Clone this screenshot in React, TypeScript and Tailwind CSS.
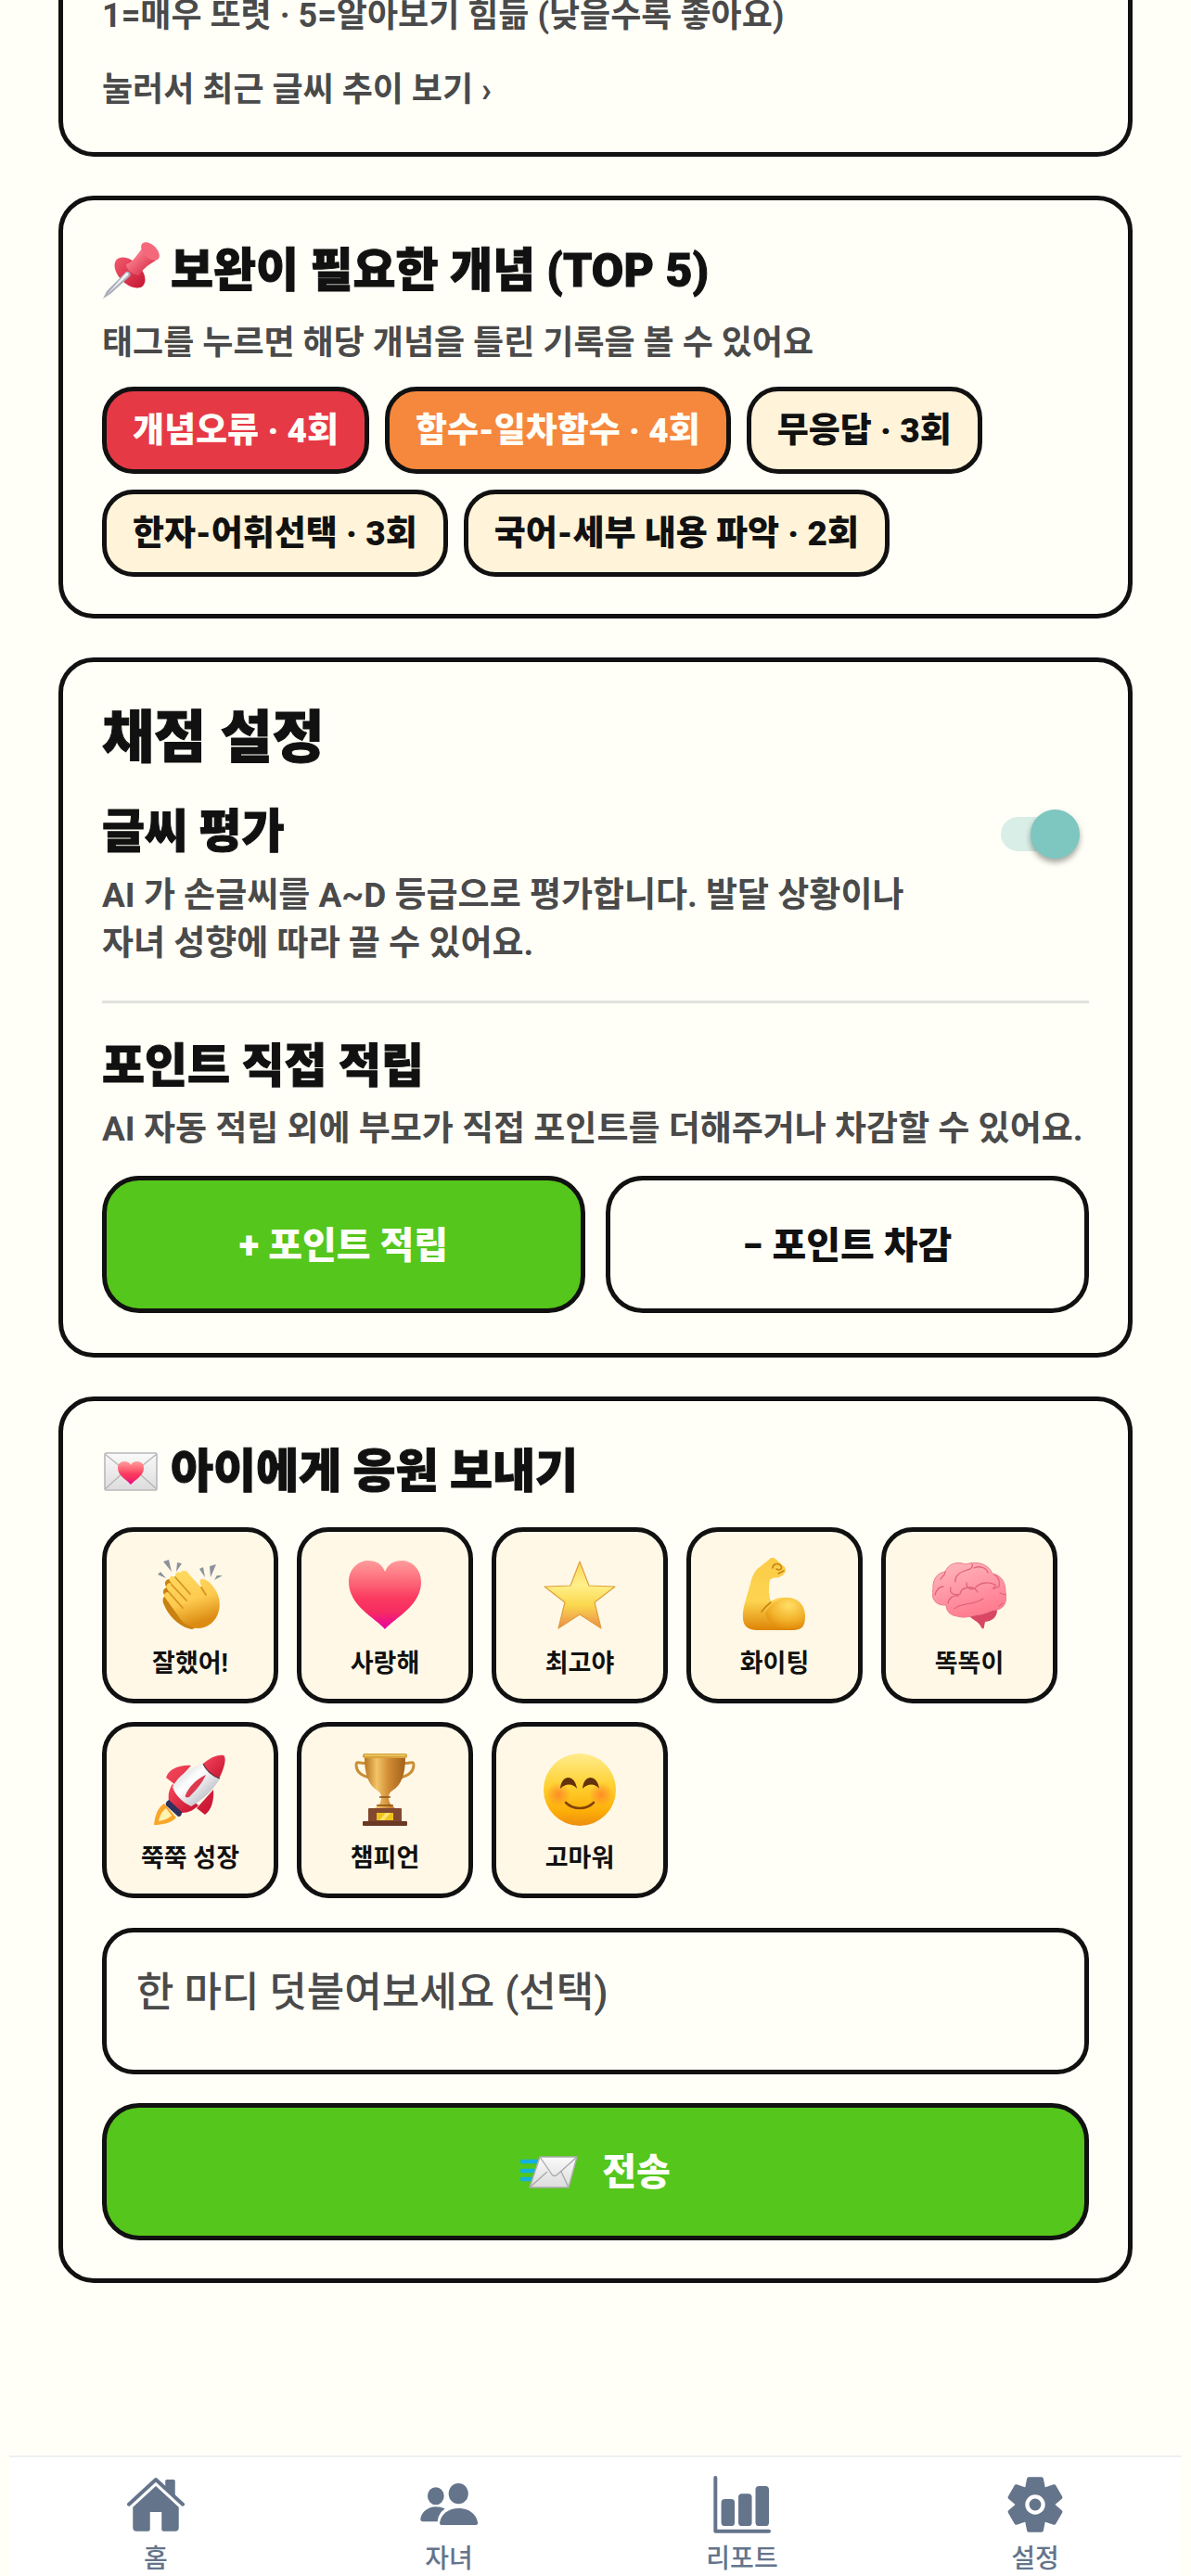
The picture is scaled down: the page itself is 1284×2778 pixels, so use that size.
import { useState } from 'react'
import type { ReactNode } from 'react'
import clsx from 'clsx'

type Tone = 'red' | 'orange' | 'cream'

interface Concept {
  name: string
  count: number
  tone: Tone
}

const CONCEPTS: Concept[] = [
  { name: '개념오류', count: 4, tone: 'red' },
  { name: '함수-일차함수', count: 4, tone: 'orange' },
  { name: '무응답', count: 3, tone: 'cream' },
  { name: '한자-어휘선택', count: 3, tone: 'cream' },
  { name: '국어-세부 내용 파악', count: 2, tone: 'cream' },
]

const TONES: Record<Tone, string> = {
  red: 'bg-[#e63946] text-[#fffff8]',
  orange: 'bg-[#f6883d] text-[#fffff8]',
  cream: 'bg-[#fff3d9] text-[#111111]',
}

function Emoji({ children }: { children: ReactNode }) {
  return (
    <svg viewBox="0 0 80 80" className="size-20" aria-hidden="true">
      {children}
    </svg>
  )
}

function Clap() {
  return (
    <Emoji>
      <defs>
        <linearGradient id="clap" x1="0" y1="0" x2="0.3" y2="1">
          <stop offset="0" stopColor="#ffdc62" />
          <stop offset="0.6" stopColor="#fdcb50" />
          <stop offset="1" stopColor="#dd8c12" />
        </linearGradient>
      </defs>
      <path d="M5 18l3-3 6 7zM11 4l6-2 3 13zM26 5l5 1-6 9zM50 12l4-2 2 11zM61 9l7-2-6 14zM66 24l3-5 6 0z" fill="#8b929c" />
      <path d="M17 23c-5 1-5 6-2 9-5 1-5 6-2 9-3 2-3 6-1 10 5 12 17 24 30 26l14-6L30 22z" fill="#c9810f" />
      <path
        d="M29 16c4-4 8-2 10 2l13 14c0-4-3-8 0-9 6-1 11 5 15 11 8 12 6 30-6 38-10 7-22 4-30-4L13 43c-3-4 2-8 5-5l-3-5c-2-5 3-8 6-4l-3-4c-2-4 3-7 6-4-1-4 3-7 5-5z"
        fill="url(#clap)"
      />
      <path d="M24 21l16 18M20 29l16 17M17 37l15 17M52 32l5 8" fill="none" stroke="#d79321" strokeWidth="1.8" strokeLinecap="round" />
    </Emoji>
  )
}

function Heart() {
  return (
    <Emoji>
      <defs>
        <linearGradient id="heart" x1="0" y1="0" x2="0" y2="1">
          <stop offset="0" stopColor="#ff9c9c" />
          <stop offset="0.3" stopColor="#fd6a7a" />
          <stop offset="0.55" stopColor="#fb3a60" />
          <stop offset="0.75" stopColor="#f62c62" />
          <stop offset="1" stopColor="#e600a4" />
        </linearGradient>
      </defs>
      <path
        d="M40 77C30 65 1 52 1 26 1 11 12 3 22 3c9 0 15 4 18 12 3-8 9-12 18-12 10 0 21 8 21 23 0 26-29 39-39 51z"
        fill="url(#heart)"
      />
    </Emoji>
  )
}

function Star() {
  return (
    <Emoji>
      <defs>
        <linearGradient id="star" x1="0" y1="0" x2="0" y2="1">
          <stop offset="0" stopColor="#fbd65a" />
          <stop offset="0.35" stopColor="#fff08a" />
          <stop offset="0.65" stopColor="#fbd84e" />
          <stop offset="1" stopColor="#ea8a4a" />
        </linearGradient>
      </defs>
      <path
        d="M40 4l10 26 28 1-22 17 7 28-23-15-23 15 7-28L2 31l28-1z"
        fill="url(#star)"
        stroke="#dfa03c"
        strokeWidth="1.2"
        strokeLinejoin="round"
      />
    </Emoji>
  )
}

function Muscle() {
  return (
    <Emoji>
      <defs>
        <linearGradient id="muscle" x1="0" y1="0" x2="0" y2="1">
          <stop offset="0" stopColor="#fbcc48" />
          <stop offset="0.6" stopColor="#fdd44f" />
          <stop offset="1" stopColor="#dd8406" />
        </linearGradient>
        <radialGradient id="bicep" cx="0.6" cy="0.25" r="0.8">
          <stop offset="0" stopColor="#ffdf66" />
          <stop offset="0.6" stopColor="#f3b22c" />
          <stop offset="1" stopColor="#e08a08" />
        </radialGradient>
      </defs>
      <path
        d="M34 2c2-3 5-3 8 0l9 8c3 4-1 9-6 11-4 1-8 0-10 3-2 8-1 17 1 23 5-4 12-5 20-4 12 2 17 10 17 20 0 11-3 14-12 15H20C9 77 5 73 6 59c1-9 5-20 8-31 2-9 5-15 10-18z"
        fill="url(#muscle)"
      />
      <path d="M30 60c6-12 16-17 26-17 12 2 16 10 16 20 0 10-4 13-12 13-14 1-26-2-30-16z" fill="url(#bicep)" />
      <path d="M38 11c0-5 7-6 9-2 2 3-2 5-5 3M50 14l-6 3M26 58c3-4 6-7 10-10" fill="none" stroke="#c98213" strokeWidth="1.6" strokeLinecap="round" />
    </Emoji>
  )
}

function Brain() {
  return (
    <Emoji>
      <defs>
        <linearGradient id="brain" x1="0" y1="0" x2="0.4" y2="1">
          <stop offset="0" stopColor="#ffb9c0" />
          <stop offset="1" stopColor="#ff7d90" />
        </linearGradient>
      </defs>
      <path d="M38 61c5 6 12 7 15 14 1 2 3 2 3-1l1-5c8-1 13-5 13-13l-10-6z" fill="#d94763" />
      <path
        d="M14 15c3-8 12-12 22-8 12-4 24-1 29 10 9 2 14 8 14 20 2 8 0 17-9 19-7 0-11 4-18 5-10 1-16 5-25 2-9-1-12-7-12-12C4 52-2 44 1 34 0 24 5 16 14 15z"
        fill="url(#brain)"
        stroke="#ec7f8d"
        strokeWidth="1"
      />
      <path
        d="M20 32c-2 6 3 9 10 7 1-7 14-11 19-2M37 27c0 6 4 8 9 6 4-6 14-8 22-4l-1 4M25 26c-1-8 6-11 13-13 5-1 6-4 5-6M14 15c0 4-3 4-5 8M45 11c6-3 14 0 15 5M24 55c6-7 19-3 31-11M67 18c5 3 6 8 5 13l-7 2M17 49c1-6 6-9 11-8M73 38l6 2M72 52l4-3M3 40c2-7 5-9 9-9"
        fill="none"
        stroke="#e0657c"
        strokeWidth="1.3"
        strokeLinecap="round"
      />
    </Emoji>
  )
}

function Rocket() {
  return (
    <Emoji>
      <defs>
        <linearGradient id="rocket-body" x1="0" y1="0" x2="1" y2="1">
          <stop offset="0.1" stopColor="#d2d3da" />
          <stop offset="0.4" stopColor="#ffffff" />
          <stop offset="0.9" stopColor="#a9abb6" />
        </linearGradient>
        <linearGradient id="rocket-red" x1="0" y1="0" x2="1" y2="1">
          <stop offset="0" stopColor="#f5495c" />
          <stop offset="1" stopColor="#c6112f" />
        </linearGradient>
      </defs>
      <path d="M12 55C5 59 2 68 1 78c9 0 19-2 24-8z" fill="#f9a62b" />
      <path d="M14 60c-5 4-7 9-8 14 6-1 11-3 14-6z" fill="#fff3b0" />
      <path d="M41 14c-13-1-24 4-27 13l9 7zM65 40c1 11-2 22-9 27l-9-7z" fill="url(#rocket-red)" />
      <path d="M21 34c-4 6-5 12-4 18l14 13c7 0 13-3 18-8z" fill="url(#rocket-red)" />
      <path d="M54 12C40 16 27 25 21 37c3 9 10 16 20 21 11-6 24-17 31-30z" fill="url(#rocket-body)" />
      <path d="M54 12c7-6 15-10 22-9 4 3 0 16-5 25-7-3-14-9-17-16z" fill="url(#rocket-red)" />
      <path d="M54 12c3 7 10 13 18 16" fill="none" stroke="#5b3441" strokeWidth="1.2" />
      <path d="M35 46c3-8 11-17 22-22-4 9-11 17-18 24-3 1-5 0-4-2z" fill="#dd3a50" />
      <path d="M17 51c-3 2-4 4-3 6l13 12c3 0 4-2 4-5z" fill="#2e315c" />
    </Emoji>
  )
}

function Trophy() {
  return (
    <Emoji>
      <defs>
        <linearGradient id="trophy" x1="0" y1="0" x2="1" y2="0">
          <stop offset="0" stopColor="#b8741c" />
          <stop offset="0.3" stopColor="#f3c467" />
          <stop offset="0.6" stopColor="#cf8a34" />
          <stop offset="1" stopColor="#a3611a" />
        </linearGradient>
      </defs>
      <path
        d="M19 11c-4 2-10-3-10 2 0 8 5 12 15 14M61 11c4 2 10-3 10 2 0 8-5 12-15 14"
        fill="none"
        stroke="#c98f35"
        strokeWidth="3"
        strokeLinecap="round"
      />
      <path d="M18 5h44c0 18-4 30-14 36-3 2-4 4-4 7 0 6 2 8 8 13H28c6-5 8-7 8-13 0-3-1-5-4-7C22 35 18 23 18 5z" fill="url(#trophy)" />
      <rect x="16" y="1" width="48" height="5" rx="2" fill="#d9a33b" />
      <path d="M18 3h44" stroke="#f8dd83" strokeWidth="1.2" />
      <path d="M34 48h12M31 57h18" stroke="#8a5317" strokeWidth="1.4" />
      <rect x="22" y="60" width="36" height="15" rx="1" fill="#82492f" />
      <rect x="16" y="74" width="48" height="5" rx="1" fill="#6b3823" />
      <rect x="31" y="65" width="18" height="8" fill="#f0c21c" />
      <path d="M34 73l7-8h5l-7 8z" fill="#fbe56d" />
    </Emoji>
  )
}

function Smile() {
  return (
    <Emoji>
      <defs>
        <linearGradient id="smile" x1="0" y1="0" x2="0" y2="1">
          <stop offset="0" stopColor="#ffec8e" />
          <stop offset="0.45" stopColor="#fed12f" />
          <stop offset="0.8" stopColor="#fcae08" />
          <stop offset="1" stopColor="#ee8c10" />
        </linearGradient>
        <radialGradient id="blush">
          <stop offset="0" stopColor="#ff7a2a" stopOpacity="0.75" />
          <stop offset="1" stopColor="#ff7a2a" stopOpacity="0" />
        </radialGradient>
      </defs>
      <circle cx="40" cy="40" r="39" fill="url(#smile)" />
      <circle cx="17" cy="45" r="13" fill="url(#blush)" />
      <circle cx="63" cy="45" r="13" fill="url(#blush)" />
      <path d="M19 39c1-16 16-16 18 0-4-6-13-6-18 0zM43 39c1-16 16-16 18 0-4-6-13-6-18 0z" fill="#63310b" />
      <path d="M25 54c8 8 22 8 30 0" fill="none" stroke="#83420a" strokeWidth="2.6" strokeLinecap="round" />
    </Emoji>
  )
}

function Pushpin() {
  return (
    <svg viewBox="0 0 62 62" className="size-[62px] shrink-0" aria-hidden="true">
      <defs>
        <linearGradient id="pin" x1="0" y1="0" x2="1" y2="0">
          <stop offset="0" stopColor="#f0566a" />
          <stop offset="1" stopColor="#c91a35" />
        </linearGradient>
        <linearGradient id="pin-neck" x1="0" y1="0" x2="1" y2="1">
          <stop offset="0.2" stopColor="#fb8594" />
          <stop offset="0.9" stopColor="#d62842" />
        </linearGradient>
      </defs>
      <ellipse cx="30" cy="33" rx="20" ry="12" transform="rotate(45 30 33)" fill="url(#pin)" />
      <path d="M26 24c6-2 9-6 17-17l15 13c-10 6-14 9-18 16-6 0-14-6-14-12z" fill="url(#pin-neck)" />
      <ellipse cx="52" cy="10" rx="12" ry="7" transform="rotate(45 52 10)" fill="#f4687b" />
      <path d="M26 32c3-1 6 2 4 5L9 56l-8 5 4-8z" fill="#a9adb8" />
      <path d="M26 33c2 0 3 1 2 3L5 57z" fill="#eef0f4" />
    </svg>
  )
}

function LoveLetter() {
  return (
    <svg viewBox="0 0 62 44" className="h-11 w-[62px] shrink-0" aria-hidden="true">
      <defs>
        <linearGradient id="paper" x1="0" y1="0" x2="0" y2="1">
          <stop offset="0" stopColor="#fafafa" />
          <stop offset="1" stopColor="#dcdcdc" />
        </linearGradient>
      </defs>
      <rect x="3" y="2" width="56" height="40" rx="1.5" fill="url(#paper)" stroke="#b9b9b9" strokeWidth="1.6" />
      <path d="M3 3l26 21c1 1 3 1 4 0L59 3M3 41l20-18M59 41L39 23" fill="none" stroke="#b4b4b4" strokeWidth="1.2" />
      <path d="M31 36c-4-5-14-9-14-18 0-5 4-7 7-7s6 1 7 4c1-3 4-4 7-4s7 2 7 7c0 9-10 13-14 18z" fill="url(#heart)" />
    </svg>
  )
}

function FlyingLetter() {
  return (
    <svg viewBox="0 0 62 38" className="h-[38px] w-[62px] shrink-0" aria-hidden="true">
      <path d="M2 7h17M2 17h14M2 26h12" stroke="#12b2dc" strokeWidth="4.6" strokeLinecap="round" />
      <path d="M21 2h40l-9 33H10z" fill="url(#paper)" stroke="#ababab" strokeWidth="1.4" strokeLinejoin="round" />
      <path d="M21 2l13 19c1 2 4 2 6 0L61 2M10 35l19-17M52 35l-8-17" fill="none" stroke="#a8a8a8" strokeWidth="1.3" />
    </svg>
  )
}

const CHEERS: { label: string; icon: ReactNode }[] = [
  { label: '잘했어!', icon: <Clap /> },
  { label: '사랑해', icon: <Heart /> },
  { label: '최고야', icon: <Star /> },
  { label: '화이팅', icon: <Muscle /> },
  { label: '똑똑이', icon: <Brain /> },
  { label: '쭉쭉 성장', icon: <Rocket /> },
  { label: '챔피언', icon: <Trophy /> },
  { label: '고마워', icon: <Smile /> },
]

const TOOTH_ANGLES = [0, 60, 120, 180, 240, 300]

const NAV: { label: string; icon: ReactNode }[] = [
  {
    label: '홈',
    icon: (
      <>
        <path d="M6 93L94 12l88 81" fill="none" stroke="currentColor" strokeWidth="12" strokeLinecap="round" strokeLinejoin="round" />
        <path d="M125 38V17q0-5 5-5h22q5 0 5 5v52z" />
        <path d="M94 33l75 69v67q0 12-12 12h-38q-6 0-6-6v-57H75v57q0 6-6 6H31q-12 0-12-12v-67z" />
      </>
    ),
  },
  {
    label: '자녀',
    icon: (
      <>
        <ellipse cx="51" cy="66" rx="27" ry="29" />
        <ellipse cx="125" cy="58" rx="32" ry="34" />
        <path d="M9 149q-9 0-8-9c4-22 25-39 50-39q18 0 30 7c-13 9-22 21-24 41z" />
        <path d="M72 161q-9 0-8-9c4-27 29-46 62-46s57 19 62 46q1 9-8 9z" />
      </>
    ),
  },
  {
    label: '리포트',
    icon: (
      <>
        <path d="M7 6v175h175" fill="none" stroke="currentColor" strokeWidth="12" strokeLinecap="round" strokeLinejoin="round" />
        <rect x="26" y="76" width="44" height="88" rx="12" />
        <rect x="82" y="58" width="44" height="106" rx="12" />
        <rect x="138" y="33" width="44" height="131" rx="12" />
      </>
    ),
  },
  {
    label: '설정',
    icon: (
      <g transform="translate(94 94)">
        <circle r="64" />
        {TOOTH_ANGLES.map((angle) => (
          <path
            key={angle}
            d="M-21-84h42l6 30h-54z"
            transform={`rotate(${angle})`}
            stroke="currentColor"
            strokeWidth="12"
            strokeLinejoin="round"
          />
        ))}
        <circle r="26" fill="none" stroke="#ffffff" strokeWidth="13" />
      </g>
    ),
  },
]

function Card({ children, className }: { children: ReactNode; className?: string }) {
  return (
    <section className={clsx('border-[5px] border-[#111111] px-[42px]', className)}>
      {children}
    </section>
  )
}

export default function App() {
  const [grading, setGrading] = useState(true)
  const [message, setMessage] = useState('')

  return (
    <div className="flex min-h-screen flex-col bg-[#fffff8] font-[Roboto,'Noto_Sans_CJK_KR',sans-serif] text-[#111111]">
      <main className="flex flex-col gap-[42px] px-[63px]">
        {/* Handwriting summary */}
        <Card className="rounded-b-[38px] border-t-0 pb-10 text-[36px] leading-[54px] font-bold text-[#4a4a4a]">
          <p className="-mt-2.5">1=매우 또렷 · 5=알아보기 힘듦 (낮을수록 좋아요)</p>
          <button type="button" className="mt-[26px] block text-left">
            눌러서 최근 글씨 추이 보기 ›
          </button>
        </Card>

        {/* Weak concepts */}
        <Card className="rounded-[38px] pt-[41px] pb-10">
          <h2 className="flex items-center gap-3 text-[50px] leading-[70px] font-black [-webkit-text-stroke:1px]">
            <Pushpin />
            보완이 필요한 개념 (TOP 5)
          </h2>
          <p className="mt-4 text-[36px] leading-[54px] font-bold text-[#4a4a4a]">
            태그를 누르면 해당 개념을 틀린 기록을 볼 수 있어요
          </p>
          <div className="mt-5 flex flex-wrap gap-[17px]">
            {CONCEPTS.map(({ name, count, tone }) => (
              <button
                key={name}
                type="button"
                className={clsx(
                  'h-[94px] rounded-[34px] border-[5px] border-[#111111] px-7 pt-0.5 text-[37px] font-black',
                  TONES[tone],
                )}
              >
                {name} · {count}회
              </button>
            ))}
          </div>
        </Card>

        {/* Grading settings */}
        <Card className="rounded-[38px] pt-[38px] pb-[43px]">
          <h2 className="text-[61px] leading-[88px] font-black [-webkit-text-stroke:1px]">채점 설정</h2>
          <div className="mt-4 flex justify-between">
            <div>
              <h3 className="text-[50px] leading-[82px] font-black [-webkit-text-stroke:1px]" id="grading-label">
                글씨 평가
              </h3>
              <p className="mt-0.5 text-[37px] leading-[52px] font-bold text-[#4a4a4a]">
                AI 가 손글씨를 A~D 등급으로 평가합니다. 발달 상황이나
                <br />
                자녀 성향에 따라 끌 수 있어요.
              </p>
            </div>
            <label className="relative mt-[17px] mr-2.5 flex h-[53px] w-[85px] shrink-0 items-center">
              <input
                type="checkbox"
                role="switch"
                aria-labelledby="grading-label"
                checked={grading}
                onChange={(e) => setGrading(e.target.checked)}
                className="peer h-[37px] w-20 appearance-none rounded-full bg-[#d8eee6]"
              />
              <span className="pointer-events-none absolute left-0 size-[53px] rounded-full bg-[#7ec6c0] shadow-[0_4px_6px_rgba(0,0,0,0.35)] peer-checked:left-8" />
            </label>
          </div>
          <hr className="mt-[35px] border-t-[3px] border-[#e2e2de]" />
          <h3 className="mt-7 text-[50px] leading-[80px] font-black [-webkit-text-stroke:1px]">포인트 직접 적립</h3>
          <p className="mt-0.5 text-[37px] leading-[52px] font-bold text-[#4a4a4a]">
            AI 자동 적립 외에 부모가 직접 포인트를 더해주거나 차감할 수 있어요.
          </p>
          <div className="mt-6 grid grid-cols-2 gap-[22px]">
            <button
              type="button"
              className="h-[148px] rounded-[40px] border-[5px] border-[#111111] bg-[#55c61b] pt-1 text-[40px] font-black text-[#fffff8]"
            >
              + 포인트 적립
            </button>
            <button
              type="button"
              className="h-[148px] rounded-[40px] border-[5px] border-[#111111] pt-1 text-[40px] font-black"
            >
              − 포인트 차감
            </button>
          </div>
        </Card>

        {/* Cheer message */}
        <Card className="rounded-[38px] pt-10 pb-[41px]">
          <h2 className="flex items-center gap-3 text-[50px] leading-[72px] font-black [-webkit-text-stroke:1px]">
            <LoveLetter />
            아이에게 응원 보내기
          </h2>
          <div className="mt-6 flex flex-wrap gap-5">
            {CHEERS.map(({ label, icon }) => (
              <button
                key={label}
                type="button"
                className="flex h-[190px] w-[190px] flex-col items-center gap-3.5 rounded-[34px] border-[5px] border-[#111111] bg-[#fff8e7] pt-7 text-[27px] leading-10 font-bold"
              >
                {icon}
                {label}
              </button>
            ))}
          </div>
          <textarea
            aria-label="한 마디"
            rows={1}
            value={message}
            onChange={(e) => setMessage(e.target.value)}
            placeholder="한 마디 덧붙여보세요 (선택)"
            className="mt-8 block h-[158px] w-full resize-none rounded-[34px] border-[5px] border-[#111111] px-8 pt-[33px] text-[44px] leading-[64px] font-medium outline-none placeholder:text-[#4a4a4a]"
          />
          <button
            type="button"
            className="mt-[31px] flex h-[148px] w-full items-center justify-center gap-[26px] rounded-[40px] border-[5px] border-[#111111] bg-[#55c61b] pt-0.5 text-[40px] font-black text-[#fffff8]"
          >
            <FlyingLetter />
            전송
          </button>
        </Card>
      </main>

      <nav className="mx-2.5 mt-auto grid h-[130px] grid-cols-4 border-t-2 border-[#ecf0f0] bg-white pt-5">
        {NAV.map(({ label, icon }) => (
          <a key={label} href="#" className="flex flex-col items-center gap-2.5 text-[28px] leading-9 font-medium text-[#64748b]">
            <svg viewBox="0 0 188 188" fill="currentColor" className="size-[62px]" aria-hidden="true">
              {icon}
            </svg>
            {label}
          </a>
        ))}
      </nav>
    </div>
  )
}
